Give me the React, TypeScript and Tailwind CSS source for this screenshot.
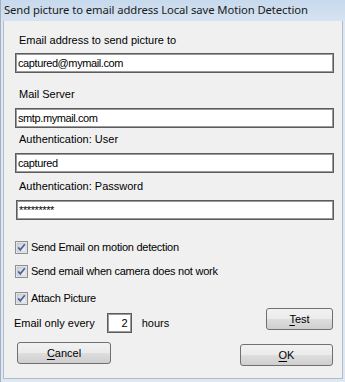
import React from 'react';

const font = { fontFamily: '"Liberation Sans", Arial, sans-serif' };

const TextBox: React.FC<{ value: string; className?: string }> = ({ value, className = '' }) => (
  <div
    className={`h-[20px] border border-[#5c5c5c] bg-white pl-[2px] text-[11px] leading-[18px] tracking-[-0.4px] text-black shadow-[inset_0_0_0_1px_#9a9a9a] ${className}`}
  >
    {value}
  </div>
);

const CheckBox: React.FC<{ label: string; className?: string }> = ({ label, className = '' }) => (
  <div className={`flex items-center ${className}`}>
    <svg width="13" height="13" viewBox="0 0 13 13" className="shrink-0">
      <defs>
        <linearGradient id="cbfill" x1="0" y1="0" x2="1" y2="1">
          <stop offset="0" stopColor="#cbcfd5" />
          <stop offset="1" stopColor="#f6f6f6" />
        </linearGradient>
      </defs>
      <rect x="0.5" y="0.5" width="12" height="12" fill="#f4f4f4" stroke="#8f8f8f" />
      <rect x="2" y="2" width="9" height="9" fill="url(#cbfill)" stroke="#b3b8bf" strokeWidth="0.6" />
      <path d="M3.2 6.4 L5.3 8.9 L9.8 3.2" fill="none" stroke="#4c61a0" strokeWidth="1.7" />
    </svg>
    <span className="ml-[3px] text-[11px] leading-[14px] tracking-[-0.25px] text-black">{label}</span>
  </div>
);

const Button: React.FC<{ first: string; rest: string; className?: string }> = ({ first, rest, className = '' }) => (
  <div
    className={`flex h-[22px] items-center justify-center rounded-[3px] border border-[#707070] bg-[linear-gradient(#f2f2f2_0%,#ebebeb_48%,#dddddd_52%,#cfcfcf_100%)] text-[11px] text-black ${className}`}
  >
    <span>
      <span className="underline underline-offset-[2px]">{first}</span>
      {rest}
    </span>
  </div>
);

export default function App() {
  return (
    <div
      className="flex h-[382px] w-[345px] flex-col border-l border-[#a3b1c0] bg-[#dfe8f2]"
      style={font}
    >
      <div className="flex h-[21px] shrink-0 items-center bg-[linear-gradient(#c7d9ec,#d6e3f1)] pl-[3px]">
        <span
          className="text-[11.3px] text-[#1b1b1b]"
          style={{ fontFamily: '"Noto Sans", "Open Sans", sans-serif', letterSpacing: '-0.1px' }}
        >
          Send picture to email address Local save Motion Detection
        </span>
      </div>
      <div className="mx-[2px] mb-[3px] flex flex-1 flex-col border border-t-0 border-[#aebccc] bg-[#f0f0f0] pl-[11px] pr-[8px]">
        <div className="mt-[12px] pl-[4px] text-[11px] leading-[14px]">Email address to send picture to</div>
        <TextBox value="captured@mymail.com" className="mt-[6px]" />

        <div className="mt-[14px] pl-[4px] text-[11px] leading-[14px]">Mail Server</div>
        <TextBox value="smtp.mymail.com" className="mt-[7px]" />

        <div className="mt-[4px] pl-[4px] text-[11px] leading-[14px]">Authentication: User</div>
        <TextBox value="captured" className="mt-[7px]" />

        <div className="mt-[6px] pl-[4px] text-[11px] leading-[14px]">Authentication: Password</div>
        <TextBox value="*********" className="ml-[1px] mt-[7px]" />

        <CheckBox label="Send Email on motion detection" className="mt-[20px]" />
        <CheckBox label="Send email when camera does not work" className="mt-[10px]" />
        <CheckBox label="Attach Picture" className="mt-[13px]" />

        <div className="mt-[8px] flex items-start">
          <span className="ml-[-1px] text-[11px] leading-[20px]">Email only every</span>
          <div className="ml-[12px] h-[20px] w-[25px] border border-[#5c5c5c] bg-white pr-[3px] text-right text-[11px] leading-[18px] shadow-[inset_0_0_0_1px_#9a9a9a]">
            2
          </div>
          <span className="ml-[10px] text-[11px] leading-[20px]">hours</span>
          <Button first="T" rest="est" className="ml-auto mr-[1px] mt-[-5px] w-[67px]" />
        </div>

        <div className="mt-[9px] flex items-start">
          <Button first="C" rest="ancel" className="ml-[2px] w-[94px]" />
          <Button first="O" rest="K" className="ml-auto mr-[1px] mt-[2px] w-[93px]" />
        </div>
      </div>
    </div>
  );
}
